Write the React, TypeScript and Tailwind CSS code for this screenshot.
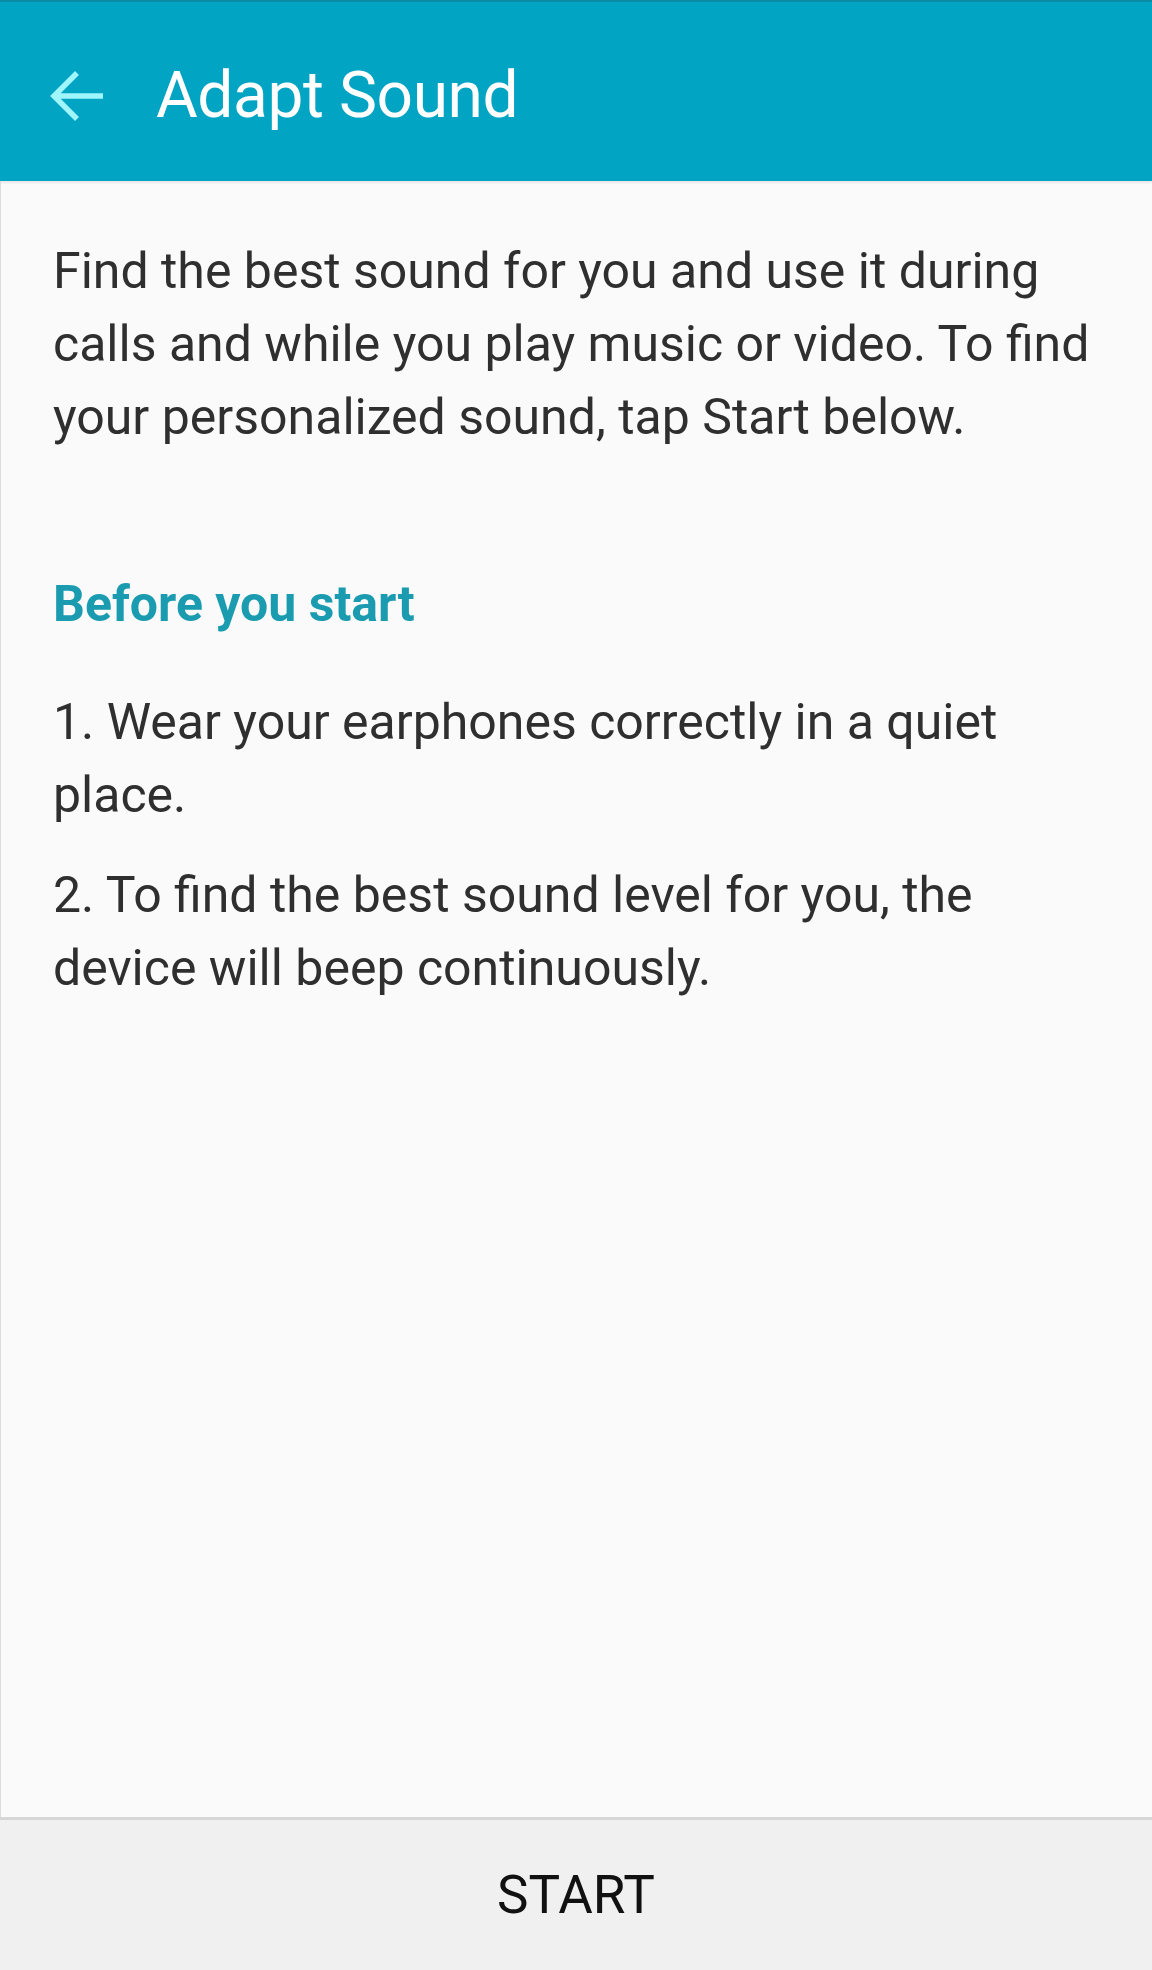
import { useState } from 'react';

const STEPS = [
  '1. Wear your earphones correctly in a quiet place.',
  '2. To find the best sound level for you, the device will beep continuously.',
];

function BackArrow() {
  return (
    <svg width="54" height="52" viewBox="0 0 54 52" fill="none" aria-hidden="true">
      <path
        d="M27 3 L4 26 L27 49 M4 26 H53"
        stroke="#9ff6fd"
        strokeWidth="5.5"
        strokeLinecap="butt"
        strokeLinejoin="miter"
      />
    </svg>
  );
}

export default function App() {
  const [started, setStarted] = useState(false);

  return (
    <div
      className="flex min-h-[1970px] w-full flex-col bg-[#fafafa]"
      style={{ fontFamily: 'Roboto, "Noto Sans", Arial, sans-serif' }}
    >
      {/* Barra de título */}
      <header className="flex h-[181px] shrink-0 items-center border-t-2 border-[#0b8aa3] bg-[#02a4c4] pt-2 shadow-[0_2px_2px_rgba(0,0,0,0.08)]">
        <button className="ml-[50px] flex items-center" aria-label="Back">
          <BackArrow />
        </button>
        <h1 className="ml-[52px] text-[64px] font-normal leading-none tracking-[-0.4px] text-white">
          Adapt Sound
        </h1>
      </header>

      {/* Conteúdo */}
      <main className="flex-1 border-l border-[#dcdcdc] pl-[52px] pr-[42px] pt-[54px] text-[50px] leading-[73px] text-[#2f2f2f]">
        <p>
          Find the best sound for you and use it during calls and while you play music or video. To find
          your personalized sound, tap Start below.
        </p>

        <h2 className="mt-[114px] font-bold text-[#1a9bb0]">Before you start</h2>

        <ol className="mt-[45px] flex flex-col gap-[27px]">
          {STEPS.map((step) => (
            <li key={step}>{step}</li>
          ))}
        </ol>
      </main>

      {/* Botão inferior */}
      <button
        onClick={() => setStarted(!started)}
        className="flex h-[153px] w-full shrink-0 items-center justify-center border-t-[3px] border-[#d6d6d6] bg-[#f0f0f0] text-[53px] leading-none text-[#111111]"
      >
        START
      </button>
    </div>
  );
}
